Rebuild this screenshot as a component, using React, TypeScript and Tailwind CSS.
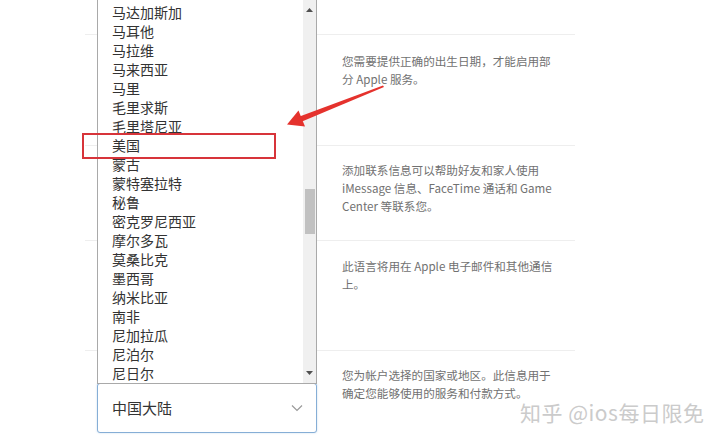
import React from "react"

const countries = [
  "马达加斯加",
  "马耳他",
  "马拉维",
  "马来西亚",
  "马里",
  "毛里求斯",
  "毛里塔尼亚",
  "美国",
  "蒙古",
  "蒙特塞拉特",
  "秘鲁",
  "密克罗尼西亚",
  "摩尔多瓦",
  "莫桑比克",
  "墨西哥",
  "纳米比亚",
  "南非",
  "尼加拉瓜",
  "尼泊尔",
  "尼日尔",
]

const font = { fontFamily: '"Noto Sans CJK SC", "Noto Sans", sans-serif' }

function Note({ lines }: { lines: string[] }) {
  return (
    <p className="text-[11.6px] leading-[18px] text-[#717171] whitespace-nowrap">
      {lines.map((l, i) => (
        <span key={i} className="block">
          {l}
        </span>
      ))}
    </p>
  )
}

export default function App() {
  return (
    <div className="relative w-[720px] h-[445px] overflow-hidden bg-white" style={font}>
      {/* page behind the popup */}
      <div className="ml-[85px] w-[490px] pt-[34px]">
        <section className="h-[111px] border-t border-[#eeeeee] pl-[257px] pt-[17px]">
          <Note lines={["您需要提供正确的出生日期，才能启用部", "分 Apple 服务。"]} />
        </section>
        <section className="h-[95px] border-t border-[#eeeeee] pl-[257px] pt-[15px]">
          <Note
            lines={[
              "添加联系信息可以帮助好友和家人使用",
              "iMessage 信息、FaceTime 通话和 Game",
              "Center 等联系您。",
            ]}
          />
        </section>
        <section className="h-[110px] border-t border-[#eeeeee] pl-[257px] pt-[16px]">
          <Note lines={["此语言将用在 Apple 电子邮件和其他通信", "上。"]} />
        </section>
        <section className="flex border-t border-[#eeeeee]">
          <div className="w-[257px] pl-[12px] pt-[32px]">
            <div className="flex items-center justify-between h-[50px] w-[220px] rounded-[3px] border border-[#86aed6] bg-white pl-[14px] pr-[13px] shadow-[0_0_2px_rgba(80,140,200,0.35)]">
              <span className="text-[15px] text-[#333]">中国大陆</span>
              <svg width="12" height="8" viewBox="0 0 12 8" fill="none">
                <path d="M1 1.5 6 6.5 11 1.5" stroke="#9a9a9a" strokeWidth="1.2" />
              </svg>
            </div>
          </div>
          <div className="pt-[15px]">
            <Note lines={["您为帐户选择的国家或地区。此信息用于", "确定您能够使用的服务和付款方式。"]} />
          </div>
        </section>
      </div>

      {/* open dropdown list */}
      <div className="absolute left-[97px] top-[-2px] flex w-[220px] h-[386px] border border-[#a9a9a9] bg-white">
        <ul className="flex-1 pt-[4px] pl-[14px]">
          {countries.map((c) => (
            <li key={c} className="text-[14px] leading-[19px] text-[#333]">
              {c}
            </li>
          ))}
        </ul>
        <div className="flex w-[13px] flex-col items-center bg-[#f0f0f0]">
          <div className="pt-[9px]">
            <svg width="7" height="4" viewBox="0 0 7 4">
              <path d="M0 4 3.5 0 7 4Z" fill="#505050" />
            </svg>
          </div>
          <div className="mt-[177px] h-[45px] w-[10px] bg-[#c1c1c1]" />
          <div className="mt-auto pb-[8px]">
            <svg width="7" height="4" viewBox="0 0 7 4">
              <path d="M0 0 3.5 4 7 0Z" fill="#505050" />
            </svg>
          </div>
        </div>
      </div>

      {/* annotation: highlight box */}
      <div className="absolute left-[82px] top-[133px] w-[194px] h-[26px] border-2 border-[#d7343a]" />

      {/* annotation: arrow */}
      <svg className="absolute left-0 top-0" width="720" height="445" viewBox="0 0 720 445">
        <path d="M383 85.5 384 87 302 121.5 299.5 116.5Z" fill="#e5322d" />
        <path d="M287 124.5 298.5 110.5 305 126.5Z" fill="#e5322d" />
      </svg>

      {/* watermark */}
      <div className="absolute left-[520px] top-[398px] text-[21px] leading-[28px] tracking-[0.5px] text-[#cbcbcb]">
        知乎 @ios每日限免
      </div>
    </div>
  )
}
